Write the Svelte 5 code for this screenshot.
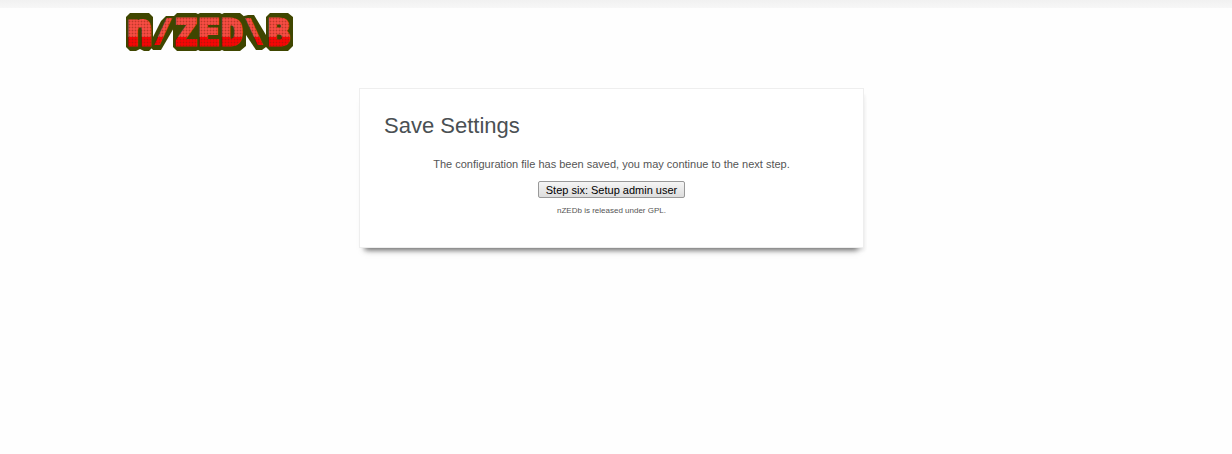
<script>
  const mark = [
    { char: 'n', x: 0, y: 33, size: 45, weight: 3 },
    { char: '/', x: 28, y: 29, size: 30, weight: 2 },
    { char: 'Z', x: 49, y: 33, size: 36, weight: 3 },
    { char: 'E', x: 72, y: 33, size: 36, weight: 3 },
    { char: 'D', x: 95, y: 33, size: 36, weight: 3 },
    { char: '\\', x: 119, y: 29, size: 30, weight: 2 },
    { char: 'B', x: 142, y: 33, size: 36, weight: 3 }
  ];
</script>

<div class="strip"></div>

<header>
  <svg class="logo" width="168" height="40" viewBox="0 0 168 40" role="img" aria-label="nZEDb">
    <defs>
      <pattern id="dots" width="3" height="3" patternUnits="userSpaceOnUse">
        <path d="M0 0h3v1H1v2H0z" fill="#8b2010" opacity="0.15" />
        <rect width="1" height="1" fill="#7c2410" opacity="0.4" />
      </pattern>
      <pattern id="mesh" width="168" height="40" patternUnits="userSpaceOnUse">
        <rect width="168" height="25" fill="#f54c43" />
        <rect y="25" width="168" height="15" fill="#f60505" />
        <rect width="168" height="40" fill="url(#dots)" />
      </pattern>
    </defs>
    <g class="plate">
      <path d="M4 1h19l4 4v30l-4 4h-5l-4-2-4 2H4l-4-4V5z" />
      <path d="M35 9l5-5h9v10L35 38h-8l-4-5z" />
      <path d="M51 1h19l2 1 2-1h20l2 1 2-1h16l6 5v28l-6 5H98l-2-1-2 1H74l-2-1-2 1H51l-4-4V5z" />
      <path d="M118 4l4-1h6l12 20v12l-4 3h-6l-14-21z" />
      <path d="M144 1h18l5 4v29l-5 5h-18l-4-4V5z" />
    </g>
    <g class="face">
      {#each mark as part}
        <text x={part.x} y={part.y} font-size={part.size} stroke-width={part.weight}>{part.char}</text>
      {/each}
    </g>
  </svg>
</header>

<main>
  <section class="card">
    <h1>Save Settings</h1>
    <form onsubmit={(event) => event.preventDefault()}>
      <p>The configuration file has been saved, you may continue to the next step.</p>
      <button type="submit">Step six: Setup admin user</button>
    </form>
    <footer>nZEDb is released under GPL.</footer>
  </section>
</main>

<style>
  :global(body) {
    background: #fefefe;
    color: #555;
    font: 11px/16px "Liberation Sans", Arial, sans-serif;
  }
  .strip {
    height: 8px;
    background: linear-gradient(#f1f1f1, #f7f7f7);
  }
  header {
    max-width: 980px;
    margin: 0 auto;
    padding-top: 4px;
  }
  .logo {
    display: block;
    overflow: visible;
  }
  .plate {
    fill: #3f4600;
  }
  .face text {
    fill: url(#mesh);
    stroke: url(#mesh);
    font-family: "DejaVu Sans Mono", monospace;
    font-weight: bold;
  }
  main {
    padding: 36px 9px 24px 0;
  }
  .card {
    box-sizing: border-box;
    max-width: 505px;
    margin: 0 auto;
    padding: 24px 24px 28px;
    border: 1px solid #eee;
    background: #fff;
    box-shadow: 0 8px 6px -6px #666, 3px 5px 3px -2px #eee;
    text-align: center;
  }
  h1 {
    margin: 0 0 18px;
    color: #4a5053;
    font-size: 22px;
    font-weight: normal;
    line-height: 25px;
    text-align: left;
  }
  p {
    margin: 0 0 9px;
  }
  button {
    display: block;
    margin: 0 auto;
    padding: 2px 7px 0;
    border: 1px solid #999;
    border-radius: 2px;
    background: linear-gradient(#f5f5f5, #ddd);
    color: #000;
    font: 11px/13px "Liberation Sans", Arial, sans-serif;
  }
  footer {
    margin-top: 5px;
    font-size: 8px;
    line-height: 16px;
  }
</style>
